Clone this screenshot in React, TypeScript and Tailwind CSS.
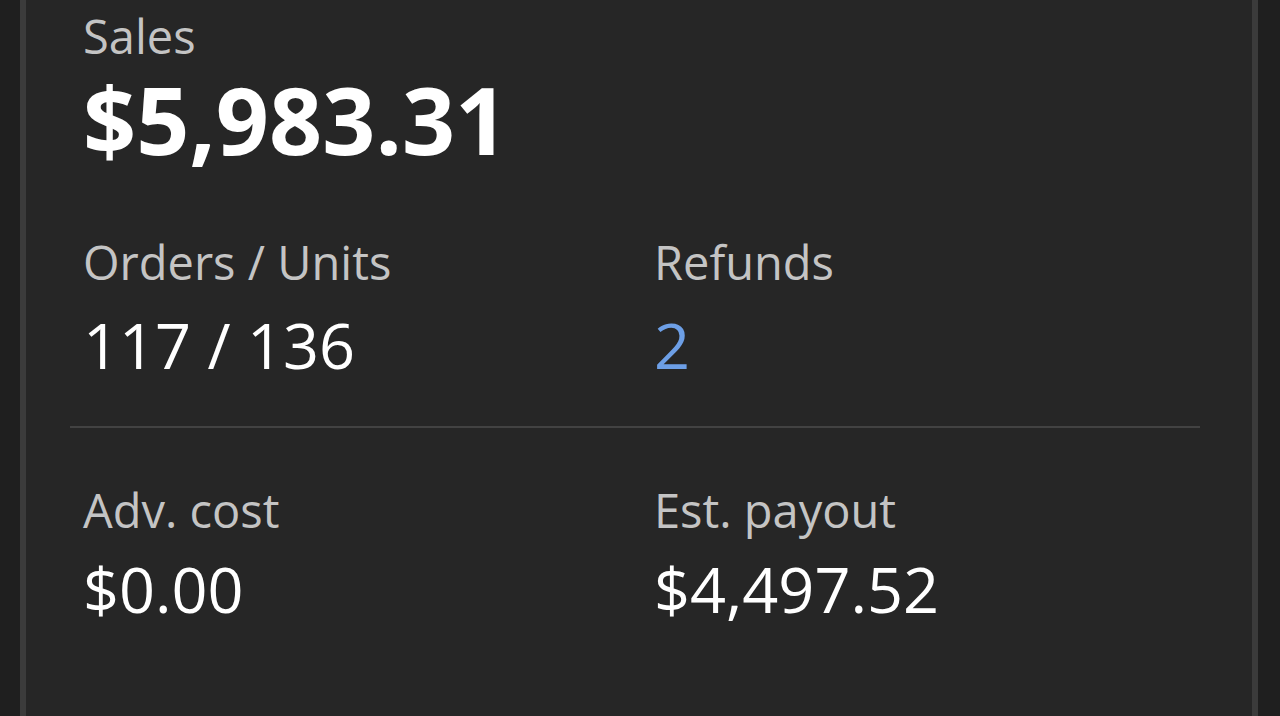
const stats = [
  { label: "Orders / Units", value: "117 / 136" },
  { label: "Refunds", value: "2", accent: true },
]

const payouts = [
  { label: "Adv. cost", value: "$0.00" },
  { label: "Est. payout", value: "$4,497.52" },
]

function Stat({ label, value, accent, gap }: { label: string; value: string; accent?: boolean; gap: string }) {
  return (
    <div>
      <div className="text-[47px] leading-none text-[#c4c4c4]">{label}</div>
      <div className={`${gap} text-[63px] leading-none ${accent ? "text-[#6d9fe6]" : "text-white"}`}>{value}</div>
    </div>
  )
}

export default function App() {
  return (
    <div className="h-[716px] w-[1280px] overflow-hidden bg-[#1f1f1f] pl-[20px]" style={{ fontFamily: '"Open Sans", "Noto Sans", sans-serif' }}>
      <div className="h-full w-[1238px] border-x-[6px] border-[#3b3b3b] bg-[#262626] pl-[44px] pr-[52px] pt-[13px]">
        <div className="pl-[13px]">
          <div className="text-[47px] leading-none text-[#c4c4c4]">Sales</div>
          <div className="mt-[13px] text-[93px] font-bold leading-none text-white">$5,983.31</div>
        </div>

        <div className="mt-[73px] grid grid-cols-[571px_1fr] pl-[13px]">
          {stats.map((s) => (
            <Stat key={s.label} label={s.label} value={s.value} accent={s.accent} gap="mt-[27px]" />
          ))}
        </div>

        <div className="mt-[50px] h-[2px] bg-[#424242]" />

        <div className="mt-[59px] grid grid-cols-[571px_1fr] pl-[13px]">
          {payouts.map((s) => (
            <Stat key={s.label} label={s.label} value={s.value} gap="mt-[23px]" />
          ))}
        </div>
      </div>
    </div>
  )
}
